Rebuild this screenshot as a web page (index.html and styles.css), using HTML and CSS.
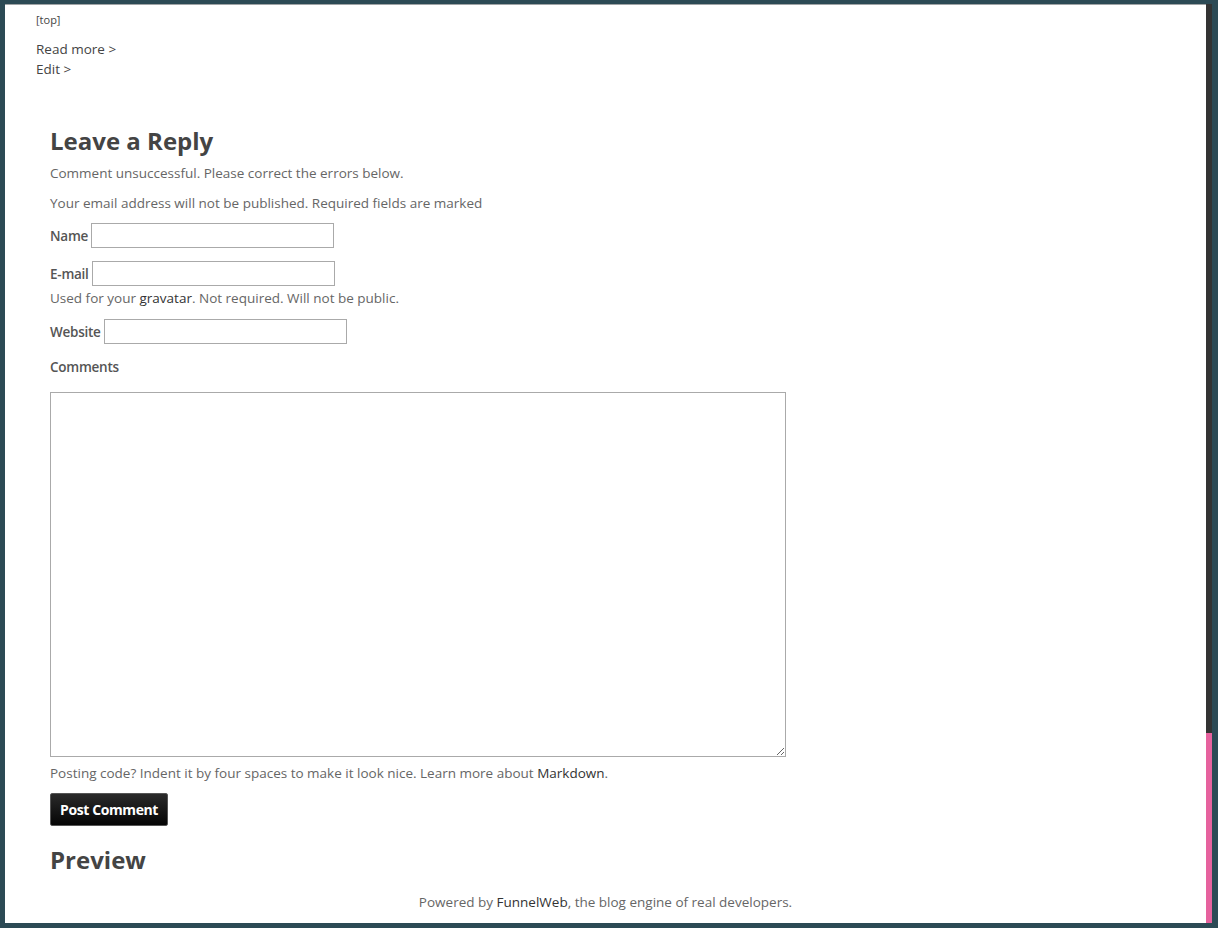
FILE: index.html
```html
<!DOCTYPE html>
<html>
<head>
<meta charset="utf-8">
<link rel="stylesheet" href="styles.css">
</head>
<body>
<div class="frame">
  <div class="main">
    <div class="post-links">
      <a class="top-link" href="#">[top]</a>
      <a class="nav-link first" href="#">Read more &gt;</a>
      <a class="nav-link" href="#">Edit &gt;</a>
    </div>
    <section class="reply">
      <h2 class="title">Leave a Reply</h2>
      <p class="note first-note">Comment unsuccessful. Please correct the errors below.</p>
      <p class="note second-note">Your email address will not be published. Required fields are marked</p>
      <div class="field name-field"><label>Name</label><input type="text"></div>
      <div class="field email-field"><label>E-mail</label><input type="text"></div>
      <p class="note hint">Used for your <a href="#">gravatar</a>. Not required. Will not be public.</p>
      <div class="field site-field"><label>Website</label><input type="text"></div>
      <div class="comments-label"><label>Comments</label></div>
      <textarea class="comments"></textarea>
      <p class="note posting">Posting code? Indent it by four spaces to make it look nice. Learn more about <a href="#">Markdown</a>.</p>
      <button class="submit">Post Comment</button>
      <h2 class="title preview">Preview</h2>
    </section>
    <footer class="footer">Powered by <a href="#">FunnelWeb</a>, the blog engine of real developers.</footer>
  </div>
  <div class="scrollbar"><div class="thumb"></div></div>
</div>
</body>
</html>
```
FILE: styles.css
```css
html, body {
  margin: 0;
  padding: 0;
}
body {
  background: #2c4a55;
  height: 928px;
  overflow: hidden;
  font-family: "Open Sans", "DejaVu Sans", sans-serif;
  color: #666;
}
.frame {
  display: flex;
  margin: 4px 6px 0 5px;
  height: 919px;
}
.main {
  flex: 1;
  background: #fff;
  border-top: 1px solid #a0a4a6;
  display: flex;
  flex-direction: column;
}
.scrollbar {
  width: 6px;
  background: #333;
  display: flex;
  flex-direction: column;
  justify-content: flex-end;
}
.thumb {
  height: 190px;
  background: #e6629e;
}
a {
  color: #333;
  text-decoration: none;
}
.post-links {
  display: flex;
  flex-direction: column;
  align-items: flex-start;
  padding-left: 31px;
  padding-top: 7px;
}
.top-link {
  font-size: 11px;
  line-height: 15px;
  color: #444;
}
.nav-link {
  font-size: 13.5px;
  line-height: 20px;
  color: #444;
}
.nav-link.first {
  margin-top: 12px;
}
.reply {
  padding-left: 45px;
  display: flex;
  flex-direction: column;
  align-items: flex-start;
}
.title {
  margin: 46px 0 0;
  font-size: 24px;
  line-height: 32px;
  font-weight: 700;
  color: #444;
}
.note {
  margin: 0;
  font-size: 13.5px;
  line-height: 20px;
  color: #666;
}
.first-note { margin-top: 6px; }
.second-note { margin-top: 10px; }
.field {
  display: flex;
  align-items: center;
  gap: 3px;
}
.field label, .comments-label label {
  font-size: 13.5px;
  line-height: 20px;
  font-weight: 600;
  letter-spacing: -0.25px;
  color: #555;
}
.field input {
  width: 239px;
  height: 21px;
  border: 1px solid #aaa;
  padding: 1px;
  margin: 0;
  box-sizing: content-box;
  background: #fff;
}
.name-field { margin-top: 10px; }
.email-field { margin-top: 13px; }
.hint { margin-top: 2px; }
.site-field { margin-top: 11px; }
.comments-label { margin-top: 11px; }
.comments {
  margin: 15px 0 0;
  width: 736px;
  height: 365px;
  box-sizing: border-box;
  border: 1px solid #aaa;
  resize: both;
  background: #fff;
}
.posting { margin-top: 6px; }
.submit {
  margin-top: 10px;
  width: 118px;
  height: 33px;
  border: 1px solid #555;
  border-radius: 2px;
  background: linear-gradient(#2a2a2a, #050505);
  color: #fff;
  font-family: "Open Sans", "DejaVu Sans", sans-serif;
  font-size: 14px;
  font-weight: 700;
  letter-spacing: -0.4px;
  padding: 0;
}
.preview { margin-top: 18px; }
.footer {
  margin-top: 16px;
  text-align: center;
  font-size: 13.5px;
  line-height: 20px;
  color: #666;
}
```
